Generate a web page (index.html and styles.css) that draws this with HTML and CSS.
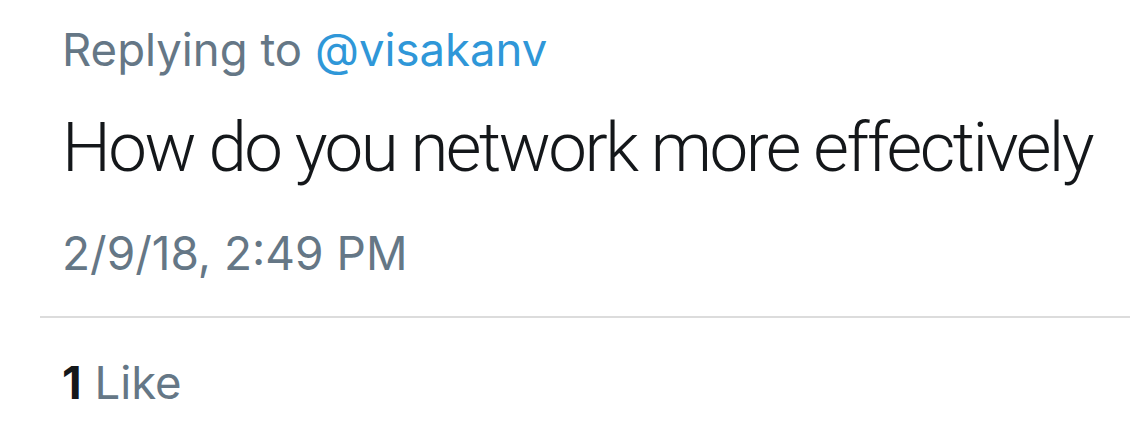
FILE: index.html
```html
<!DOCTYPE html>
<html>
<head>
<meta charset="utf-8">
<link rel="stylesheet" href="styles.css">
</head>
<body>
<div class="tweet">
  <div class="reply">Replying to <span class="handle">@visakanv</span></div>
  <div class="text">How do you network more effectively</div>
  <div class="time">2/9/18, 2:49 PM</div>
  <div class="divider"></div>
  <div class="likes"><span class="count">1</span> Like</div>
</div>
</body>
</html>
```

FILE: styles.css
```css
html, body {
  margin: 0;
  padding: 0;
  background: #ffffff;
}
body {
  font-family: "Inter", "Roboto", "Liberation Sans", sans-serif;
  width: 1130px;
  height: 431px;
  overflow: hidden;
}
.tweet {
  display: flex;
  flex-direction: column;
  padding-top: 20px;
}
.reply, .text, .time, .likes {
  padding-left: 62px;
  white-space: nowrap;
}
.reply {
  font-size: 45.5px;
  line-height: 60px;
  color: #657786;
}
.handle {
  color: #2f97d8;
}
.text {
  margin-top: 28px;
  font-family: "Roboto", "Inter", sans-serif;
  font-size: 69px;
  font-weight: 300;
  letter-spacing: -2.5px;
  line-height: 80px;
  color: #14171a;
}
.time {
  margin-top: 35px;
  font-size: 46px;
  line-height: 60px;
  color: #657786;
}
.divider {
  margin-top: 33px;
  margin-left: 40px;
  height: 2px;
  background: #dcdcdc;
}
.likes {
  margin-top: 35px;
  font-size: 45.5px;
  line-height: 60px;
  color: #657786;
}
.count {
  color: #14171a;
  font-weight: 700;
}
```
